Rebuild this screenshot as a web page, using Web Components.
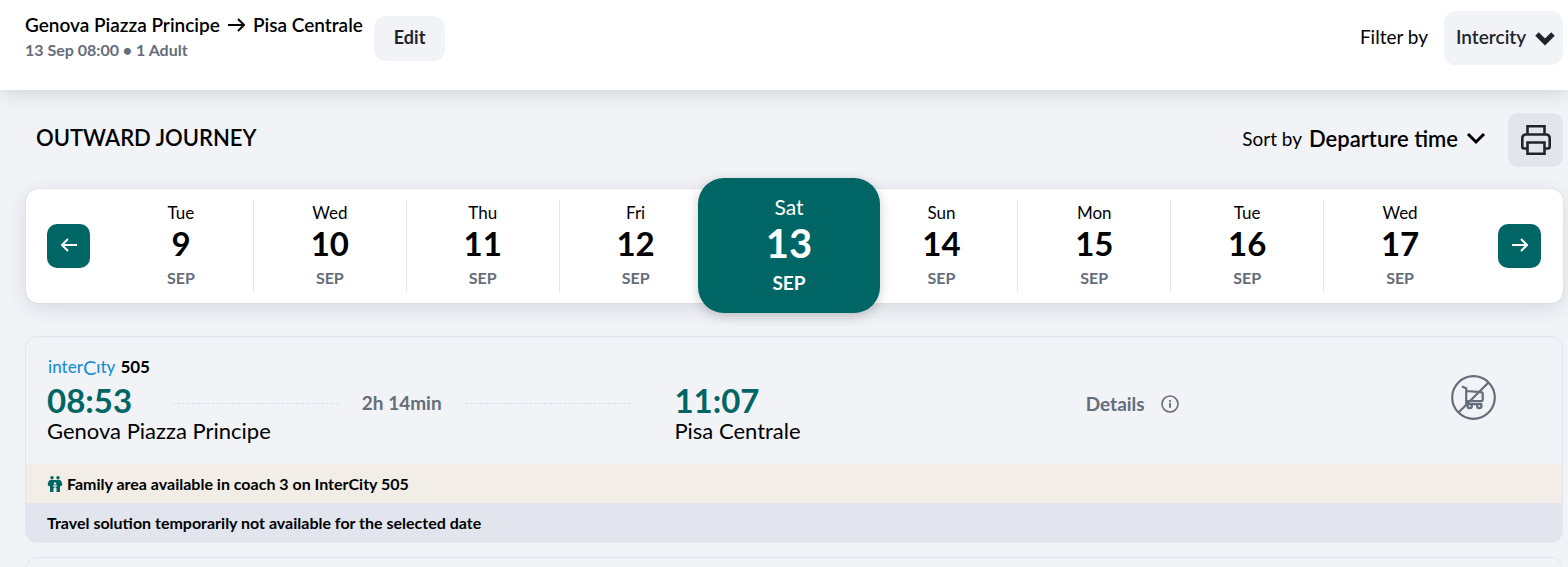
<!DOCTYPE html>
<html lang="en">
<head>
<meta charset="utf-8">
<meta name="viewport" content="width=device-width, initial-scale=1">
<title>Travel solutions</title>
<style>
  html, body { margin: 0; }
  body {
    --teal: #006665; --grey: #656c7a; --page: #f1f3f7; --line: #e2e5ec; --ink: #1f252c; --strong: 600;
    font-family: Lato, "Liberation Sans", sans-serif; font-size: 16px; color: #000;
    background: var(--page); height: 100vh; overflow: hidden;
  }
</style>
</head>
<body>
<travel-page></travel-page>
<script>
const define = (name, html, setup) => {
  const template = document.createElement('template');
  template.innerHTML = html;
  customElements.define(name, class extends HTMLElement {
    constructor() {
      super();
      this.attachShadow({ mode: 'open' }).append(template.content.cloneNode(true));
    }
    connectedCallback() { if (setup) setup(this, this.shadowRoot); }
  });
};

define('drop-down', `
  <style>
    :host { display: inline-grid; align-items: center; }
    select, svg { grid-area: 1 / 1; }
    select { appearance: none; border: 0; margin: 0; cursor: pointer; font: inherit; font-weight: var(--strong); color: inherit; background: none; border-radius: 12px; }
    svg { justify-self: end; pointer-events: none; fill: none; stroke: currentColor; width: 20px; height: 20px; }
    :host([kind="pill"]) { color: var(--ink); font-size: 19px; }
    :host([kind="pill"]) select { background: var(--page); height: 54px; padding: 0 36px 4px 12px; }
    :host([kind="pill"]) svg { margin-right: 8px; stroke-width: 5; }
    :host([kind="plain"]) { font-size: 22px; }
    :host([kind="plain"]) select { padding: 0 28px 0 0; height: 32px; }
    :host([kind="plain"]) svg { stroke-width: 3; }
  </style>
  <select><option></option></select>
  <svg viewBox="0 0 20 20" aria-hidden="true"><path d="M2 6l8 8 8-8"/></svg>
`, (el, root) => {
  root.querySelector('option').textContent = el.getAttribute('value');
  root.querySelector('select').setAttribute('aria-label', el.getAttribute('label'));
});

define('search-header', `
  <style>
    :host { display: flex; justify-content: space-between; align-items: flex-start; box-sizing: border-box; height: 90px; padding: 11px 5px 0 25px; background: #fff; box-shadow: 0 2px 20px rgba(0,0,0,.15); position: relative; }
    .trip { display: flex; gap: 11px; }
    h1 { display: flex; align-items: center; gap: 8px; margin: 2px 0 0; font-size: 19px; line-height: 24px; font-weight: var(--strong); }
    p { margin: 0; font-size: 16px; line-height: 26px; font-weight: 700; color: var(--grey); }
    button { height: 45px; padding: 0 20px 4px; margin-top: 5px; border: 0; border-radius: 12px; background: var(--page); color: var(--ink); font: 700 18px Lato, sans-serif; }
    .filter { display: flex; align-items: center; gap: 16px; font-size: 19px; }
    .filter span { padding-bottom: 4px; }
    svg { width: 17px; height: 14px; fill: none; stroke: #000; stroke-width: 2; }
  </style>
  <div class="trip">
    <div>
      <h1><span>Genova Piazza Principe</span><svg viewBox="0 0 17 14" aria-label="to"><path d="M0 7h16M10 1l6 6-6 6"/></svg><span>Pisa Centrale</span></h1>
      <p>13 Sep 08:00 • 1 Adult</p>
    </div>
    <button type="button">Edit</button>
  </div>
  <div class="filter"><span>Filter by</span><drop-down kind="pill" label="Filter by" value="Intercity"></drop-down></div>
`);

define('journey-bar', `
  <style>
    :host { display: flex; justify-content: space-between; align-items: center; height: 54px; padding-left: 10px; }
    h2 { margin: 0 0 4px; font-size: 22px; line-height: 28px; font-weight: var(--strong); }
    .tools { display: flex; align-items: center; gap: 22px; }
    .sort { display: flex; align-items: center; gap: 7px; font-size: 19px; margin-bottom: 4px; }
    button { display: grid; place-items: center; width: 55px; height: 54px; padding: 0; border: 0; border-radius: 10px; background: var(--line); }
    svg { width: 30px; height: 30px; fill: none; stroke: var(--ink); stroke-width: 2.600; }
  </style>
  <h2>OUTWARD JOURNEY</h2>
  <div class="tools">
    <div class="sort"><span>Sort by</span><drop-down kind="plain" label="Sort by" value="Departure time"></drop-down></div>
    <button type="button" aria-label="Print"><svg viewBox="0 0 30 30"><path d="M6.500 9.500V1.300h17v8.200M6.500 23.500H3.300a2 2 0 0 1-2-2V13a3.500 3.500 0 0 1 3.500-3.500h20.400a3.500 3.500 0 0 1 3.500 3.500v8.500a2 2 0 0 1-2 2h-3.200M6.500 17.500h17v11.200h-17z"/></svg></button>
  </div>
`);

define('day-cell', `
  <style>
    :host { flex: 1 1 0; min-width: 0; display: block; box-sizing: border-box; padding: 11px 0; }
    button { display: flex; flex-direction: column; align-items: center; width: 100%; height: 92px; padding: 0; border: 0; border-right: 1px solid var(--line); background: none; font-family: inherit; color: #000; }
    :host([edge]) button { border-right-color: transparent; }
    :host([first]) button { padding-left: 8px; }
    .day { font-size: 17px; line-height: 25px; }
    .num { font-size: 33px; line-height: 37px; font-weight: 700; }
    .month { font-size: 16px; line-height: 32px; font-weight: 700; color: var(--grey); }
    :host([selected]) { padding: 0; margin: -11px -15px; z-index: 1; flex-basis: 30px; }
    :host([selected]) button { height: 135px; padding-top: 15px; border: 0; border-radius: 26px; background: var(--teal); color: #fff; box-shadow: 0 3px 12px rgba(0,0,0,.2); }
    :host([selected]) .day { font-size: 21px; line-height: 28px; }
    :host([selected]) .num { font-size: 40px; line-height: 44px; }
    :host([selected]) .month { font-size: 19px; line-height: 36px; color: #fff; }
  </style>
  <button type="button"><span class="day"></span><span class="num"></span><span class="month">SEP</span></button>
`, (el, root) => {
  root.querySelector('.day').textContent = el.getAttribute('day');
  root.querySelector('.num').textContent = el.getAttribute('num');
});

define('day-strip', `
  <style>
    :host { display: flex; align-items: center; margin-top: 22px; padding: 0 22px 0 21px; height: 114px; background: #fff; border-radius: 12px; box-shadow: 0 5px 20px rgba(40,45,60,.12), 0 0 1px rgba(40,45,60,.3); }
    .days { flex: 1; display: flex; align-items: flex-start; height: 114px; margin: 0 21px 0 11px; }
    .nav { display: grid; place-items: center; flex: none; width: 43px; height: 44px; padding: 0 0 2px; border: 0; border-radius: 10px; background: var(--teal); }
    svg { width: 16px; height: 14px; fill: none; stroke: #fff; stroke-width: 2; }
  </style>
  <button class="nav" type="button" aria-label="Previous days"><svg viewBox="0 0 16 14"><path d="M16 7H1M7 1L1 7l6 6"/></svg></button>
  <div class="days">
    <day-cell first day="Tue" num="9"></day-cell>
    <day-cell day="Wed" num="10"></day-cell>
    <day-cell day="Thu" num="11"></day-cell>
    <day-cell edge day="Fri" num="12"></day-cell>
    <day-cell selected day="Sat" num="13"></day-cell>
    <day-cell day="Sun" num="14"></day-cell>
    <day-cell day="Mon" num="15"></day-cell>
    <day-cell day="Tue" num="16"></day-cell>
    <day-cell edge day="Wed" num="17"></day-cell>
  </div>
  <button class="nav" type="button" aria-label="Next days"><svg viewBox="0 0 16 14"><path d="M0 7h15M9 1l6 6-6 6"/></svg></button>
`);

define('solution-card', `
  <style>
    :host { display: block; border: 1px solid var(--line); border-radius: 12px; margin-left: -1px; overflow: hidden; }
    .body { padding: 19px 21px 24px; }
    .train { display: flex; align-items: center; gap: 5px; font-size: 17px; line-height: 22px; font-weight: 700; }
    .logo { font-size: 17px; font-weight: 500; color: #1a8fd1; padding-left: 1px; }
    .logo b { font-size: 20px; font-weight: 400; line-height: 16px; vertical-align: -2px; }
    .row { display: grid; grid-template-columns: 627fr 411fr 455fr; align-items: start; }
    .leg { display: flex; align-items: center; gap: 23px; padding-right: 43px; height: 44px; }
    .time { font-size: 33px; line-height: 44px; font-weight: 700; color: var(--teal); }
    .leg i { flex: 1; border-top: 1px dashed #dcdfe6; margin-top: 7px; }
    .leg .time { margin-right: 17px; }
    .dur { font-size: 19px; font-weight: 700; color: var(--grey); line-height: 24px; margin-top: 5px; }
    .place { font-size: 22px; line-height: 18px; }
    .info { display: flex; align-items: center; gap: 16px; height: 24px; margin-top: 13px; color: var(--grey); font-size: 19px; font-weight: 700; text-decoration: none; }
    .info svg { margin-top: 2px; }
    .end { display: flex; justify-content: space-between; }
    .cart { margin: -3px 45px 0 0; width: 45px; height: 45px; }
    svg { fill: none; stroke: var(--grey); display: block; }
    .note { display: flex; align-items: center; gap: 4px; padding: 0 21px; height: 39px; font-size: 16px; font-weight: 700; }
    .family { background: #f2ede6; }
    .off { background: #e2e5ed; }
    .family svg { width: 16px; height: 16px; fill: var(--teal); stroke: none; }
  </style>
  <div class="body">
    <div class="train"><span class="logo">inter<b>C</b>ıty</span><span>505</span></div>
    <div class="row">
      <div>
        <div class="leg"><span class="time">08:53</span><i></i><span class="dur">2h 14min</span><i></i></div>
        <div class="place">Genova Piazza Principe</div>
      </div>
      <div>
        <div class="time">11:07</div>
        <div class="place">Pisa Centrale</div>
      </div>
      <div class="end">
        <a class="info" href="#details"><span>Details</span><svg width="18" height="18" viewBox="0 0 18 18" stroke-width="1.6" aria-hidden="true"><circle cx="9" cy="9" r="8"/><path d="M9 7.8v5M9 5v1.8" stroke-width="1.9"/></svg></a>
        <svg class="cart" viewBox="0 0 45 45" stroke-width="2.200" role="img" aria-label="Not purchasable"><circle cx="22.5" cy="22.5" r="21.3"/><path d="M37.500 7.500l-30 30M11 11.500l4.200 1.800v12.900h14.800q1.700 0 1.700-1.700v-5.500q0-1.700-1.700-1.800l-14.800-1.200M15.200 26.200v3h16"/><circle cx="18.700" cy="31" r="2.200"/><circle cx="28.300" cy="31" r="2.200"/></svg>
      </div>
    </div>
  </div>
  <div class="note family"><svg viewBox="0 0 16 16" aria-hidden="true"><circle cx="5" cy="1.800" r="1.700"/><circle cx="11" cy="1.800" r="1.700"/><path d="M3 4h10q2 1 2.300 5l-1.500 1.500-.8-1V16h-3.500v-4h-3v4H3V9.500l-.8 1L.7 9Q1 5 3 4z"/><circle cx="8" cy="7.500" r="1.200" fill="#f2ede6"/><path d="M6 9.800h4M8 9.500V14" stroke="#f2ede6" stroke-width="1.200"/></svg><span>Family area available in coach 3 on InterCity 505</span></div>
  <div class="note off">Travel solution temporarily not available for the selected date</div>
`);

define('empty-card', `
  <style>:host { display: block; height: 60px; border: 1px solid var(--line); border-radius: 12px; margin-left: -1px; }</style>
`);

define('travel-page', `
  <style>
    :host { display: flex; flex-direction: column; height: 100vh; }
    main { flex: 1; min-height: 0; overflow: hidden; padding: 23px 5px 0 26px; }
    search-header, journey-bar, day-strip { flex: none; }
    .list { display: flex; flex-direction: column; gap: 14px; margin-top: 33px; }
  </style>
  <search-header></search-header>
  <main>
    <journey-bar></journey-bar>
    <day-strip></day-strip>
    <div class="list"><solution-card></solution-card><empty-card></empty-card></div>
  </main>
`);
</script>
</body>
</html>
